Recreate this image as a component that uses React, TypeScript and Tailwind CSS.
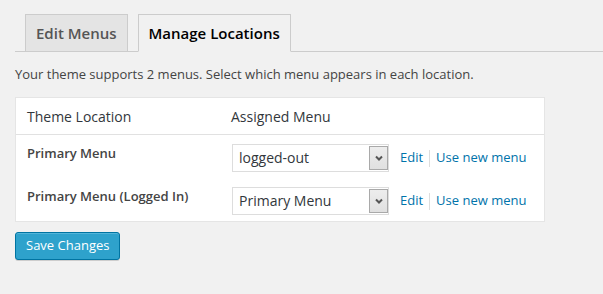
import React from 'react';

interface LocationRow {
  label: string;
  selected: string;
}

const rows: LocationRow[] = [
  { label: 'Primary Menu', selected: 'logged-out' },
  { label: 'Primary Menu (Logged In)', selected: 'Primary Menu' },
];

const FakeSelect: React.FC<{ value: string }> = ({ value }) => (
  <div className="flex items-center w-[157px] h-[28px] border border-[#dddddd] bg-white pl-[6px] text-[14px] text-[#32373c]">
    <span className="flex-1 leading-[20px]">{value}</span>
    <div className="flex items-center justify-center w-[19px] h-[24px] border border-[#a9a9a9] bg-gradient-to-b from-[#ededed] to-[#e0e0e0]">
      <svg width="8" height="6" viewBox="0 0 8 6">
        <path d="M1 1.5 L4 4.5 L7 1.5" fill="none" stroke="#555555" strokeWidth="2" />
      </svg>
    </div>
  </div>
);

export default function App() {
  return (
    <div className="min-h-screen bg-[#f1f1f1] pt-[14px] pl-[15px] font-['Open_Sans',sans-serif]">
      {/* tabs */}
      <div className="flex items-end gap-[10px] border-b border-[#cccccc] pl-[10px] h-[38px]">
        <div className="flex items-center h-[38px] -mb-px px-[10px] border border-[#cccccc] bg-[#e4e4e4] text-[15px] font-semibold text-[#555555]">
          Edit Menus
        </div>
        <div className="flex items-center h-[38px] -mb-px px-[10px] border border-[#cccccc] border-b-[#f1f1f1] bg-[#f1f1f1] text-[15px] font-semibold text-[#000000]">
          Manage Locations
        </div>
      </div>

      <p className="mt-[12px] text-[13px] leading-[20px] text-[#444444]">
        Your theme supports 2 menus. Select which menu appears in each location.
      </p>

      {/* locations table */}
      <div className="mt-[13px] w-[530px] border border-[#e5e5e5] bg-white">
        <div className="flex items-center h-[37px] border-b border-[#e1e1e1] px-[11px] text-[14px] text-[#32373c]">
          <div className="w-[204px]">Theme Location</div>
          <div>Assigned Menu</div>
        </div>
        <div className="flex flex-col gap-[15px] pt-[9px] pb-[6px] px-[11px]">
          {rows.map((row) => (
            <div key={row.label} className="flex items-start">
              <div className="w-[205px] text-[13px] font-semibold leading-[19px] text-[#444444]">
                {row.label}
              </div>
              <FakeSelect value={row.selected} />
              <div className="flex items-center h-[28px] ml-[11px] text-[13px] text-[#0073aa]">
                <span>Edit</span>
                <span className="mx-[6px] h-[17px] border-l border-[#dddddd]" />
                <span>Use new menu</span>
              </div>
            </div>
          ))}
        </div>
      </div>

      <button className="mt-[10px] h-[28px] px-[10px] rounded-[3px] border border-[#0074a2] bg-[#2ea2cc] text-[13px] text-white shadow-[inset_0_1px_0_rgba(120,200,230,0.5),0_1px_0_rgba(0,0,0,0.15)]">
        Save Changes
      </button>
    </div>
  );
}
